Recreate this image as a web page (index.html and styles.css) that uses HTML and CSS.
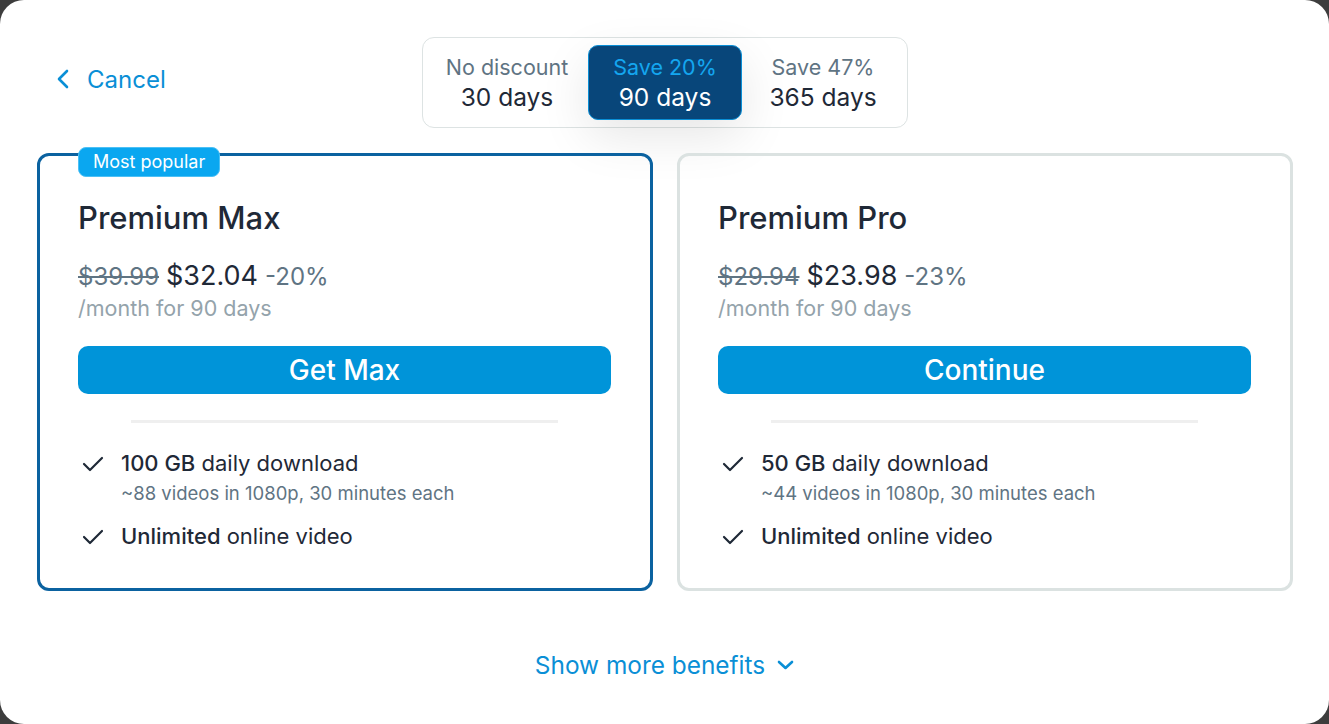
FILE: index.html
```html
<!DOCTYPE html>
<html lang="en">
<head>
<meta charset="utf-8">
<title>Plans</title>
<link rel="stylesheet" href="styles.css">
</head>
<body>
<div class="dialog">
  <header class="top">
    <a class="cancel" href="#">
      <svg class="cancel-icon" width="14" height="20" viewBox="0 0 14 20"><path d="M11 2 L3 10 L11 18" fill="none" stroke="#0a8fd6" stroke-width="2.6" stroke-linecap="round" stroke-linejoin="round"/></svg>
      <span>Cancel</span>
    </a>
    <div class="segments">
      <div class="seg">
        <span class="seg-save">No discount</span>
        <span class="seg-days">30 days</span>
      </div>
      <div class="seg seg-active">
        <span class="seg-save">Save 20%</span>
        <span class="seg-days">90 days</span>
      </div>
      <div class="seg">
        <span class="seg-save">Save 47%</span>
        <span class="seg-days">365 days</span>
      </div>
    </div>
    <div></div>
  </header>

  <main class="cards">
    <section class="card card-featured">
      <span class="badge">Most popular</span>
      <h2 class="plan-name">Premium Max</h2>
      <div class="price-line">
        <s class="old-price">$39.99</s>
        <span class="new-price">$32.04</span>
        <span class="discount">-20%</span>
      </div>
      <div class="period">/month for 90 days</div>
      <button class="cta">Get Max</button>
      <hr class="divider">
      <ul class="features">
        <li class="feature">
          <svg class="check" width="22" height="16" viewBox="0 0 22 16"><path d="M2 8 L8 14 L20 2" fill="none" stroke="#1f2937" stroke-width="2.2" stroke-linecap="round" stroke-linejoin="round"/></svg>
          <div>
            <div class="feat-title"><b>100 GB</b> daily download</div>
            <div class="feat-sub">~88 videos in 1080p, 30 minutes each</div>
          </div>
        </li>
        <li class="feature">
          <svg class="check" width="22" height="16" viewBox="0 0 22 16"><path d="M2 8 L8 14 L20 2" fill="none" stroke="#1f2937" stroke-width="2.2" stroke-linecap="round" stroke-linejoin="round"/></svg>
          <div>
            <div class="feat-title"><b>Unlimited</b> online video</div>
          </div>
        </li>
      </ul>
    </section>

    <section class="card">
      <h2 class="plan-name">Premium Pro</h2>
      <div class="price-line">
        <s class="old-price">$29.94</s>
        <span class="new-price">$23.98</span>
        <span class="discount">-23%</span>
      </div>
      <div class="period">/month for 90 days</div>
      <button class="cta">Continue</button>
      <hr class="divider">
      <ul class="features">
        <li class="feature">
          <svg class="check" width="22" height="16" viewBox="0 0 22 16"><path d="M2 8 L8 14 L20 2" fill="none" stroke="#1f2937" stroke-width="2.2" stroke-linecap="round" stroke-linejoin="round"/></svg>
          <div>
            <div class="feat-title"><b>50 GB</b> daily download</div>
            <div class="feat-sub">~44 videos in 1080p, 30 minutes each</div>
          </div>
        </li>
        <li class="feature">
          <svg class="check" width="22" height="16" viewBox="0 0 22 16"><path d="M2 8 L8 14 L20 2" fill="none" stroke="#1f2937" stroke-width="2.2" stroke-linecap="round" stroke-linejoin="round"/></svg>
          <div>
            <div class="feat-title"><b>Unlimited</b> online video</div>
          </div>
        </li>
      </ul>
    </section>
  </main>

  <footer class="more">
    <a class="more-link" href="#">
      <span>Show more benefits</span>
      <svg width="17" height="10" viewBox="0 0 17 10"><path d="M2 2 L8.5 8 L15 2" fill="none" stroke="#0a8fd6" stroke-width="2.6" stroke-linecap="round" stroke-linejoin="round"/></svg>
    </a>
  </footer>
</div>
</body>
</html>
```

FILE: styles.css
```css
* { box-sizing: border-box; }

html, body {
  margin: 0;
  padding: 0;
}

body {
  background: #3d3d3d;
  font-family: Inter, "Noto Sans", "Liberation Sans", sans-serif;
  color: #1f2937;
}

.dialog {
  width: 1329px;
  height: 724px;
  background: #ffffff;
  border-radius: 24px;
  overflow: hidden;
  display: flex;
  flex-direction: column;
}

.top {
  display: grid;
  grid-template-columns: 1fr auto 1fr;
  align-items: center;
  padding: 37px 36px 0 37px;
}

.cancel {
  display: flex;
  align-items: center;
  gap: 17px;
  color: #0a8fd6;
  text-decoration: none;
  font-size: 24px;
  padding-left: 19px;
  margin-top: -7px;
  justify-self: start;
}

.cancel-icon { display: block; }

.segments {
  display: flex;
  gap: 4px;
  padding: 7px;
  border: 1px solid #dde3e3;
  border-radius: 12px;
  background: #fff;
}

.seg {
  width: 154px;
  height: 75px;
  display: flex;
  flex-direction: column;
  align-items: center;
  justify-content: center;
  border-radius: 10px;
  border: 1px solid transparent;
}

.seg-save {
  font-size: 21.5px;
  line-height: 29px;
  color: #5f7483;
}

.seg-days {
  font-size: 24.5px;
  line-height: 30px;
  color: #1f2937;
}

.seg-active {
  background: #08467a;
  border-color: #0a8fd6;
  box-shadow: 0 16px 50px rgba(0, 0, 0, 0.10);
}

.seg-active .seg-save { color: #14a6f0; }
.seg-active .seg-days { color: #ffffff; }

.cards {
  display: flex;
  gap: 24px;
  padding: 0 36px 0 37px;
  margin-top: 25px;
}

.card {
  position: relative;
  width: 616px;
  height: 438px;
  border: 3px solid #dbe2e1;
  border-radius: 12px;
  padding: 44px 39px 0 38px;
  display: flex;
  flex-direction: column;
}

.card-featured {
  border-color: #0b62a0;
}

.badge {
  position: absolute;
  top: -9px;
  left: 38px;
  background: #0aa7f0;
  border: 1px solid #4cc0f5;
  color: #fff;
  font-size: 18px;
  line-height: 28px;
  padding: 0 14px 0 14px;
  border-radius: 8px;
}

.plan-name {
  margin: 0;
  font-size: 31px;
  font-weight: 500;
  line-height: 36px;
  color: #1f2937;
}

.price-line {
  margin-top: 24px;
  display: flex;
  align-items: baseline;
  gap: 7px;
  line-height: 32px;
}

.old-price {
  font-size: 24px;
  color: #5f7483;
}

.new-price {
  font-size: 27px;
  color: #1f2937;
}

.discount {
  font-size: 24px;
  color: #5f7483;
}

.period {
  margin-top: 2px;
  font-size: 21.5px;
  line-height: 26px;
  color: #94a3ab;
}

.cta {
  margin-top: 25px;
  height: 48px;
  width: 100%;
  border: none;
  border-radius: 10px;
  background: #0094d9;
  color: #fff;
  font-family: inherit;
  font-size: 28px;
  font-weight: 500;
}

.divider {
  margin: 26px 53px 0;
  border: none;
  height: 3px;
  background: #efefef;
}

.features {
  list-style: none;
  margin: 26px 0 0;
  padding: 0 0 0 4px;
  display: flex;
  flex-direction: column;
  gap: 13px;
}

.feature {
  display: flex;
  gap: 17px;
  align-items: flex-start;
}

.check { margin-top: 7px; flex: none; }

.feat-title {
  font-size: 22px;
  line-height: 28px;
  color: #1f2937;
}

.feat-title b { font-weight: 500; }

.feat-sub {
  font-size: 18.5px;
  line-height: 32px;
  color: #5f7483;
}

.more {
  display: flex;
  justify-content: center;
  margin-top: 59px;
}

.more-link {
  display: flex;
  align-items: center;
  gap: 12px;
  color: #0a8fd6;
  text-decoration: none;
  font-size: 24.4px;
  line-height: 30px;
}
```
